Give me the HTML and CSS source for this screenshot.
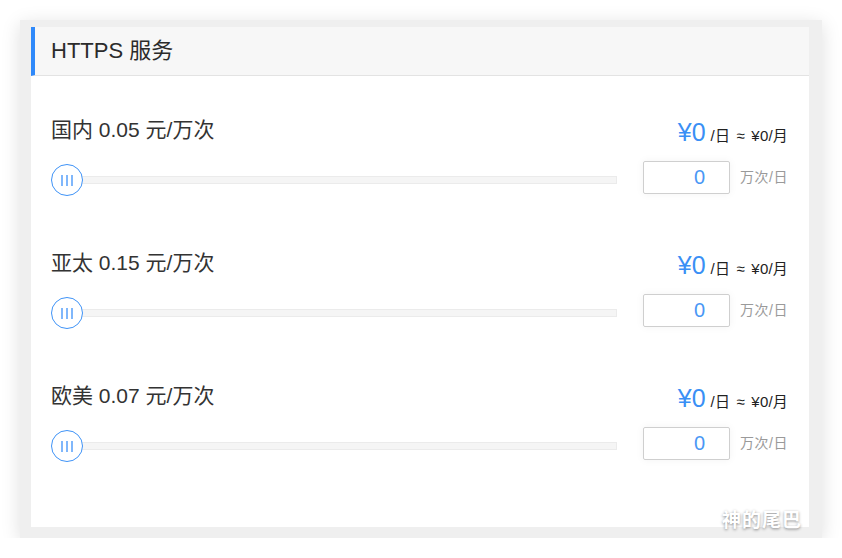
FILE: index.html
```html
<!DOCTYPE html>
<html lang="zh-CN">
<head>
<meta charset="utf-8">
<title>HTTPS 服务</title>
<link rel="stylesheet" href="styles.css">
</head>
<body>
<div class="frame">
  <div class="card">
    <div class="card-header">HTTPS 服务</div>
    <div class="card-body">
      <div class="row">
        <div class="row-top">
          <div class="label">国内 0.05 元/万次</div>
          <div class="price"><span class="amount">¥0</span><span class="per">/日 ≈ ¥0/月</span></div>
        </div>
        <div class="row-ctrl">
          <div class="slider"><div class="track"></div><div class="handle"><i></i><i></i><i></i></div></div>
          <div class="num">0</div>
          <div class="unit">万次/日</div>
        </div>
      </div>
      <div class="row">
        <div class="row-top">
          <div class="label">亚太 0.15 元/万次</div>
          <div class="price"><span class="amount">¥0</span><span class="per">/日 ≈ ¥0/月</span></div>
        </div>
        <div class="row-ctrl">
          <div class="slider"><div class="track"></div><div class="handle"><i></i><i></i><i></i></div></div>
          <div class="num">0</div>
          <div class="unit">万次/日</div>
        </div>
      </div>
      <div class="row">
        <div class="row-top">
          <div class="label">欧美 0.07 元/万次</div>
          <div class="price"><span class="amount">¥0</span><span class="per">/日 ≈ ¥0/月</span></div>
        </div>
        <div class="row-ctrl">
          <div class="slider"><div class="track"></div><div class="handle"><i></i><i></i><i></i></div></div>
          <div class="num">0</div>
          <div class="unit">万次/日</div>
        </div>
      </div>
    </div>
  </div>
  <div class="watermark">神的尾巴</div>
</div>
</body>
</html>
```
FILE: styles.css
```css
* { box-sizing: border-box; }
html, body { margin: 0; padding: 0; background: #fff; }
body {
  font-family: "Liberation Sans", "Noto Sans CJK SC", sans-serif;
  color: #333;
}
.frame {
  position: relative;
  margin: 20px 0 0 20px;
  width: 802px;
  height: 518px;
  padding: 7px 13px 11px 11px;
  background: #efefef;
  box-shadow: 0 4px 18px rgba(0,0,0,0.13);
}
.card {
  background: #fff;
  height: 500px;
}
.card-header {
  height: 49px;
  line-height: 48px;
  background: #f7f7f7;
  border-left: 4px solid #2f89fa;
  border-bottom: 1px solid #e3e3e3;
  padding-left: 16px;
  font-size: 22px;
  color: #2b2b2b;
}
.card-body {
  padding: 39px 21px 0 20px;
}
.row { margin-bottom: 52px; }
.row-top {
  display: flex;
  justify-content: space-between;
  align-items: flex-start;
  height: 30px;
}
.label { font-size: 21px; line-height: 30px; color: #333; }
.price { white-space: nowrap; line-height: 30px; padding-top: 2px; }
.amount { font-size: 25px; color: #3a8ff5; }
.per { font-size: 15px; color: #222; margin-left: 5px; word-spacing: 2px; letter-spacing: 0.2px; }
.row-ctrl {
  display: flex;
  align-items: flex-start;
  height: 36px;
  margin-top: 15px;
}
.slider {
  position: relative;
  flex: 1;
  height: 32px;
  margin-top: 4px;
}
.track {
  position: absolute;
  left: 16px;
  right: 0;
  top: 12px;
  height: 8px;
  background: #f5f5f5;
  border: 1px solid #ebebeb;
}
.handle {
  position: absolute;
  left: 0;
  top: 0;
  width: 32px;
  height: 32px;
  border-radius: 50%;
  border: 1.5px solid #3f93f7;
  background: #fff;
  display: flex;
  justify-content: center;
  align-items: center;
  gap: 3px;
}
.handle i {
  display: block;
  width: 2px;
  height: 11px;
  background: #80b7fb;
}
.num {
  width: 87px;
  height: 33px;
  margin-left: 26px;
  margin-top: 1px;
  border: 1px solid #cfcfcf;
  border-radius: 2px;
  box-shadow: 0 0 8px rgba(0,0,0,0.05);
  text-align: right;
  padding-right: 24px;
  font-size: 20px;
  line-height: 31px;
  color: #4a97f5;
}
.unit {
  margin-left: 10px;
  margin-top: 1px;
  font-size: 14px;
  letter-spacing: 0.5px;
  line-height: 33px;
  color: #9a9a9a;
}
.watermark {
  position: absolute;
  right: 20px;
  bottom: 6px;
  font-size: 19px;
  font-weight: bold;
  color: #fff;
  letter-spacing: 1px;
  text-shadow: 0 1px 3px rgba(0,0,0,0.45);
}
```
